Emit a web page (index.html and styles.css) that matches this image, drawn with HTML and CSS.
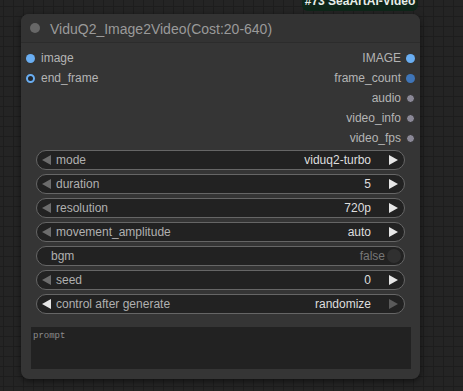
FILE: index.html
```html
<!DOCTYPE html>
<html lang="en">

<head>
    <meta charset="UTF-8">
    <meta name="viewport" content="width=device-width, initial-scale=1.0">
    <title>ViduQ2_Image2Video</title>
    <link rel="stylesheet" href="styles.css">
</head>

<body>
    <div class="canvas">
        <div class="badge">#73 SeaArtAI-Video</div>

        <div class="node">
            <div class="title">
                <span class="title-dot"></span>
                <span class="title-text">ViduQ2_Image2Video(Cost:20-640)</span>
            </div>

            <div class="slots">
                <div class="inputs">
                    <div class="slot"><span class="dot blue"></span>image</div>
                    <div class="slot"><span class="dot blue ring"></span>end_frame</div>
                </div>
                <div class="outputs">
                    <div class="slot">IMAGE<span class="dot blue"></span></div>
                    <div class="slot">frame_count<span class="dot navy"></span></div>
                    <div class="slot">audio<span class="dot grey"></span></div>
                    <div class="slot">video_info<span class="dot grey"></span></div>
                    <div class="slot">video_fps<span class="dot grey"></span></div>
                </div>
            </div>

            <div class="widgets">
                <div class="widget">
                    <span class="arrow left dim"></span>
                    <span class="label">mode</span>
                    <span class="value">viduq2-turbo</span>
                    <span class="arrow right"></span>
                </div>
                <div class="widget">
                    <span class="arrow left dim"></span>
                    <span class="label">duration</span>
                    <span class="value">5</span>
                    <span class="arrow right"></span>
                </div>
                <div class="widget">
                    <span class="arrow left dim"></span>
                    <span class="label">resolution</span>
                    <span class="value">720p</span>
                    <span class="arrow right"></span>
                </div>
                <div class="widget">
                    <span class="arrow left dim"></span>
                    <span class="label">movement_amplitude</span>
                    <span class="value">auto</span>
                    <span class="arrow right"></span>
                </div>
                <div class="widget toggle">
                    <span class="label">bgm</span>
                    <span class="value off">false</span>
                    <span class="knob"></span>
                </div>
                <div class="widget">
                    <span class="arrow left dim"></span>
                    <span class="label">seed</span>
                    <span class="value">0</span>
                    <span class="arrow right"></span>
                </div>
                <div class="widget">
                    <span class="arrow left"></span>
                    <span class="label">control after generate</span>
                    <span class="value">randomize</span>
                    <span class="arrow right dim"></span>
                </div>
            </div>

            <div class="prompt">prompt</div>
        </div>
    </div>
</body>

</html>
```

FILE: styles.css
```css
* {
    box-sizing: border-box;
}

body {
    margin: 0;
    padding: 0;
    width: 463px;
    height: 391px;
    overflow: hidden;
    font-family: Arial, "Liberation Sans", sans-serif;
}

.canvas {
    position: relative;
    width: 463px;
    height: 391px;
    background-color: #242424;
    background-image:
        linear-gradient(#1d1d1d 1px, transparent 1px),
        linear-gradient(90deg, #1d1d1d 1px, transparent 1px);
    background-size: 10px 10px;
    background-position: 3px 6px;
}

.badge {
    position: absolute;
    left: 302px;
    top: -6px;
    width: 116px;
    height: 17px;
    background: #0e2619;
    border-radius: 0 0 6px 6px;
    color: #e8eee9;
    font-size: 12px;
    font-weight: bold;
    text-align: center;
    line-height: 14px;
}

.node {
    position: absolute;
    left: 21px;
    top: 14px;
    width: 399px;
    height: 365px;
    background: #353535;
    border-radius: 8px;
    box-shadow: 0 2px 6px rgba(0, 0, 0, 0.55);
    display: flex;
    flex-direction: column;
}

.title {
    height: 29px;
    display: flex;
    align-items: center;
    background: #333;
    border-radius: 8px 8px 0 0;
    border-bottom: 1px solid #2c2c2c;
    padding-left: 9px;
}

.title-dot {
    width: 10px;
    height: 10px;
    border-radius: 50%;
    background: #676767;
}

.title-text {
    margin-left: 10px;
    margin-top: 2px;
    font-size: 14px;
    color: #9a9a9a;
}

.slots {
    display: flex;
    justify-content: space-between;
    padding-top: 5px;
}

.slot {
    height: 20px;
    display: flex;
    align-items: center;
    font-size: 12px;
    color: #b4b4b4;
}

.inputs .slot .dot {
    margin-left: 5px;
    margin-right: 6px;
}

.outputs .slot {
    justify-content: flex-end;
}

.outputs .slot .dot {
    margin-left: 5px;
    margin-right: 5px;
}

.dot {
    width: 9px;
    height: 9px;
    border-radius: 50%;
    background: #6aaef2;
}

.dot.ring {
    background: #22272d;
    border: 2px solid #6aaef2;
}

.dot.navy {
    background: #3f75b8;
}

.dot.grey {
    background: #8a8896;
    border: 1px solid #2a2a2a;
}

.widgets {
    display: flex;
    flex-direction: column;
    gap: 4px;
    margin-top: 2px;
    padding: 0 15px;
}

.widget {
    height: 20px;
    display: flex;
    align-items: center;
    background: #222;
    border: 1px solid #666;
    border-radius: 10px;
    padding: 0 6px 0 5px;
    font-size: 12px;
}

.widget .label {
    color: #b0b0b0;
    margin-left: 5px;
    flex: 1;
}

.widget .value {
    color: #dedede;
    margin-right: 18px;
}

.arrow {
    width: 0;
    height: 0;
    border-top: 5px solid transparent;
    border-bottom: 5px solid transparent;
}

.arrow.left {
    border-right: 9px solid #e6e6e6;
}

.arrow.right {
    border-left: 9px solid #e6e6e6;
}

.arrow.left.dim {
    border-right-color: #6c6c6c;
}

.arrow.right.dim {
    border-left-color: #5a5a5a;
}

.widget.toggle {
    padding-left: 14px;
    padding-right: 3px;
}

.widget.toggle .label {
    margin-left: 0;
}

.widget .value.off {
    color: #777;
    margin-right: 2px;
}

.knob {
    width: 14px;
    height: 14px;
    border-radius: 50%;
    background: #303030;
}

.prompt {
    margin: 13px 9px 0 10px;
    height: 42px;
    background: #222;
    font-family: "Liberation Mono", "DejaVu Sans Mono", monospace;
    font-size: 9px;
    color: #8c8c8c;
    padding: 4px 2px;
}
```
